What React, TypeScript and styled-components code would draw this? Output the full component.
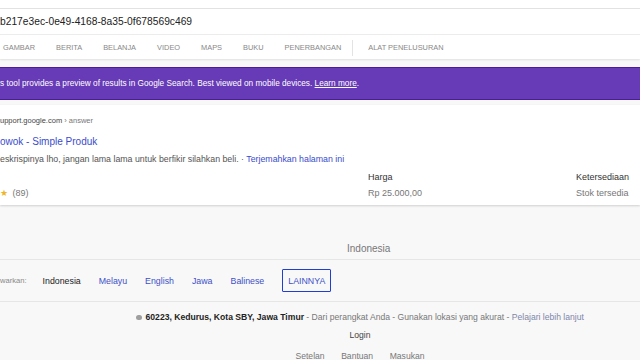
import React from "react";
import styled, { createGlobalStyle } from "styled-components";

const GlobalStyle = createGlobalStyle`
  html, body {
    margin: 0;
    padding: 0;
    background: #f8f8f8;
    overflow: hidden;
  }
  body {
    font-family: "Liberation Sans", Arial, sans-serif;
  }
`;

const tabs = ["GAMBAR", "BERITA", "BELANJA", "VIDEO", "MAPS", "BUKU", "PENERBANGAN"];
const languages = ["Melayu", "English", "Jawa", "Balinese"];
const footerLinks = ["Setelan", "Bantuan", "Masukan"];

const App = () => {
  return (
    <>
      <GlobalStyle />
      <Page>
        <Header>
          <SearchRow>b217e3ec-0e49-4168-8a35-0f678569c469</SearchRow>
          <TabRow>
            {tabs.map((t) => (
              <Tab key={t}>{t}</Tab>
            ))}
            <TabDivider />
            <Tab>ALAT PENELUSURAN</Tab>
          </TabRow>
        </Header>

        <Banner>
          s tool provides a preview of results in Google Search. Best viewed on
          mobile devices. <BannerLink href="#">Learn more</BannerLink>.
        </Banner>

        <Card>
          <Source>
            upport.google.com <Crumb>› answer</Crumb>
          </Source>
          <Title href="#">owok - Simple Produk</Title>
          <Snippet>
            eskrispinya lho, jangan lama lama untuk berfikir silahkan beli. ·{" "}
            <Translate href="#">Terjemahkan halaman ini</Translate>
          </Snippet>
          <Facts>
            <span />
            <FactLabel>Harga</FactLabel>
            <FactLabel>Ketersediaan</FactLabel>
            <Rating>
              <Stars>★</Stars>
              <Count>(89)</Count>
            </Rating>
            <FactValue>Rp 25.000,00</FactValue>
            <FactValue>Stok tersedia</FactValue>
          </Facts>
        </Card>

        <CountryBar>
          <Country>Indonesia</Country>
        </CountryBar>

        <LanguageRow>
          <LangLabel>warkan:</LangLabel>
          <Lang $current>Indonesia</Lang>
          {languages.map((l) => (
            <Lang key={l}>{l}</Lang>
          ))}
          <MoreButton>LAINNYA</MoreButton>
        </LanguageRow>

        <Footer>
          <Location>
            <Dot />
            <b>60223, Kedurus, Kota SBY, Jawa Timur</b> - Dari perangkat Anda -
            Gunakan lokasi yang akurat - <LearnLink>Pelajari lebih lanjut</LearnLink>
          </Location>
          <Login>Login</Login>
          <FooterLinks>
            {footerLinks.map((l) => (
              <span key={l}>{l}</span>
            ))}
          </FooterLinks>
        </Footer>
      </Page>
    </>
  );
};

export default App;

const Page = styled.div`
  width: 640px;
  height: 360px;
  overflow: hidden;
  background: #f8f8f8;
  color: #222;
`;

const Header = styled.header`
  background: #fff;
  padding-top: 8px;
  box-shadow: 0 1px 2px rgba(0, 0, 0, 0.1);
`;

const SearchRow = styled.div`
  height: 25px;
  display: flex;
  align-items: center;
  border-top: 1px solid #e2e2e2;
  border-bottom: 1px solid #ececec;
  font-size: 10.25px;
  color: #222;
  white-space: nowrap;
`;

const TabRow = styled.nav`
  height: 24px;
  display: flex;
  align-items: center;
  gap: 21px;
  padding-left: 3px;
`;

const Tab = styled.span`
  font-size: 7.4px;
  color: #888;
  white-space: nowrap;
`;

const TabDivider = styled.span`
  width: 1px;
  height: 16px;
  background: #e3e3e3;
  margin: 2px -6px 0 -10px;
`;

const Banner = styled.div`
  margin-top: 8px;
  height: 31px;
  display: flex;
  align-items: center;
  white-space: pre;
  background: #673ab7;
  border-top: 1px solid #4c1d9a;
  border-bottom: 1px solid #4c1d9a;
  color: #fff;
  font-size: 8.25px;
`;

const BannerLink = styled.a`
  color: #fff;
  text-decoration: underline;
`;

const Card = styled.section`
  margin-top: 5px;
  height: 100px;
  box-sizing: border-box;
  padding-top: 10px;
  background: #fff;
  box-shadow: 0 1px 2px rgba(0, 0, 0, 0.16);
`;

const Source = styled.div`
  font-size: 7.5px;
  line-height: 11px;
  color: #444;
`;

const Crumb = styled.span`
  color: #777;
`;

const Title = styled.a`
  display: block;
  margin-top: 9px;
  font-size: 10px;
  line-height: 14px;
  color: #3a4ccc;
  text-decoration: none;
`;

const Snippet = styled.div`
  margin-top: 4px;
  font-size: 8.8px;
  line-height: 12px;
  color: #545454;
`;

const Translate = styled.a`
  color: #3a4ccc;
  text-decoration: none;
`;

const Facts = styled.div`
  margin-top: 6px;
  display: grid;
  grid-template-columns: 368px 208px auto;
  row-gap: 3.5px;
  font-size: 9px;
  line-height: 12px;
`;

const FactLabel = styled.span`
  color: #333;
`;

const FactValue = styled.span`
  color: #777;
`;

const Rating = styled.span`
  display: flex;
  align-items: center;
  gap: 4.5px;
`;

const Stars = styled.span`
  font-family: "DejaVu Sans", sans-serif;
  font-size: 9px;
  color: #f0b429;
`;

const Count = styled.span`
  color: #777;
`;

const CountryBar = styled.div`
  height: 55px;
  box-sizing: border-box;
  display: flex;
  align-items: flex-end;
  padding: 0 0 4px 347px;
  border-bottom: 1px solid #e6e6e6;
`;

const Country = styled.span`
  font-size: 10px;
  line-height: 12px;
  color: #777;
`;

const LanguageRow = styled.div`
  height: 41px;
  display: flex;
  align-items: center;
  gap: 18px;
  border-bottom: 1px solid #e6e6e6;
`;

const LangLabel = styled.span`
  font-size: 7.6px;
  color: #888;
  margin-right: -2px;
`;

const Lang = styled.a<{ $current?: boolean }>`
  font-size: 8.8px;
  color: ${(p) => (p.$current ? "#222" : "#3d50c8")};
  text-decoration: none;
  cursor: pointer;
`;

const MoreButton = styled.button`
  height: 23px;
  padding: 0 5px;
  background: transparent;
  border: 1px solid #1f3fd4;
  border-radius: 1px;
  font-family: inherit;
  font-size: 8.8px;
  color: #3d50c8;
`;

/* the footer is centred on the full page, which runs 80px past the frame */
const Footer = styled.footer`
  display: flex;
  flex-direction: column;
  align-items: center;
  padding: 10px 0 0 80px;
  font-size: 8.6px;
  line-height: 11px;
  color: #777;
`;

const Location = styled.div`
  display: flex;
  align-items: center;
  white-space: pre;

  b {
    color: #222;
  }
`;

const Dot = styled.span`
  width: 5.5px;
  height: 5.5px;
  border-radius: 50%;
  background: #9e9e9e;
  margin-right: 4px;
`;

const LearnLink = styled.span`
  color: #7f86a8;
`;

const Login = styled.div`
  margin-top: 6.5px;
  color: #444;
`;

const FooterLinks = styled.div`
  margin-top: 10px;
  display: flex;
  gap: 16.5px;
`;
